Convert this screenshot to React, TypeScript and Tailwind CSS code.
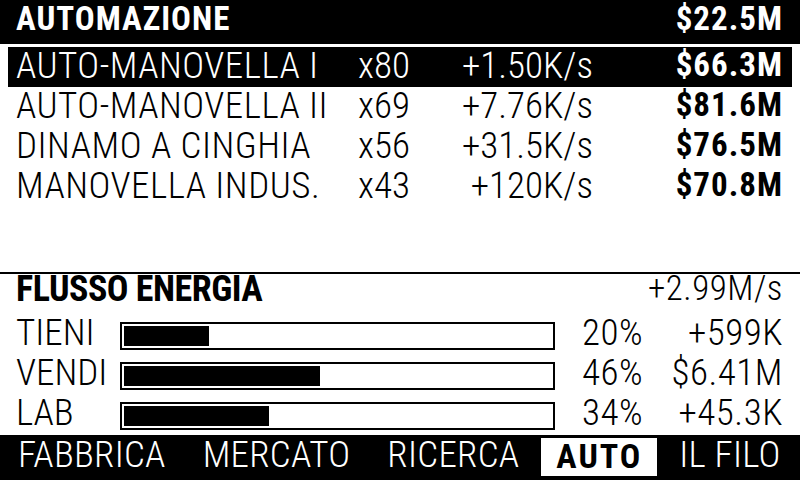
import React from 'react';

const machines = [
  { name: 'AUTO-MANOVELLA I', count: 'x80', rate: '+1.50K/s', price: '$66.3M', active: true },
  { name: 'AUTO-MANOVELLA II', count: 'x69', rate: '+7.76K/s', price: '$81.6M' },
  { name: 'DINAMO A CINGHIA', count: 'x56', rate: '+31.5K/s', price: '$76.5M' },
  { name: 'MANOVELLA INDUS.', count: 'x43', rate: '+120K/s', price: '$70.8M' },
];

const flows = [
  { label: 'TIENI', pct: 20, value: '+599K' },
  { label: 'VENDI', pct: 46, value: '$6.41M' },
  { label: 'LAB', pct: 34, value: '+45.3K' },
];

const tabs = ['FABBRICA', 'MERCATO', 'RICERCA', 'AUTO', 'IL FILO'];

export default function App() {
  return (
    <div className="w-[800px] h-[480px] bg-white text-black overflow-hidden flex flex-col [font-family:'Roboto_Condensed','Roboto',sans-serif]">
      {/* header */}
      <div className="h-[44px] shrink-0 bg-black text-white flex items-start justify-between pl-4 pr-[17px] text-[33px] leading-[38px] font-bold tracking-[1px]">
        <span>AUTOMAZIONE</span>
        <span>$22.5M</span>
      </div>

      {/* machine list */}
      <div className="h-[228px] shrink-0 pt-[3px] px-2">
        {machines.map((m) => (
          <div
            key={m.name}
            className={`h-[40px] grid grid-cols-[342px_60px_175px_1fr] items-start pl-2 pr-[9px] leading-[40px] ${
              m.active ? 'bg-black text-white' : ''
            }`}
          >
            <span className="text-[37px] font-light tracking-[0.5px] -mt-[1px]">{m.name}</span>
            <span className="text-[37px] font-light -mt-[1px]">{m.count}</span>
            <span className="text-[37px] font-light text-right -mt-[1px]">{m.rate}</span>
            <span className="text-[33px] font-bold text-right tracking-[1px] -mt-[2px]">{m.price}</span>
          </div>
        ))}
      </div>

      {/* energy flow */}
      <div className="border-t-2 border-black h-[163px] shrink-0">
        <div className="h-[40px] flex items-start justify-between pl-4 pr-[17px] leading-[40px]">
          <span className="text-[36px] font-bold tracking-[-0.5px] -mt-[5px]">FLUSSO ENERGIA</span>
          <span className="text-[35px] font-light tracking-[0.5px] -mt-[5px]">+2.99M/s</span>
        </div>
        {flows.map((f) => (
          <div key={f.label} className="h-[40px] grid grid-cols-[104px_435px_27px_70px_1fr] items-start pl-4 pr-[17px] leading-[40px]">
            <span className="text-[37px] font-light -mt-[1px]">{f.label}</span>
            <div className="mt-[8px] h-[28px] border-2 border-black p-[2px]">
              <div className="h-full bg-black" style={{ width: `${f.pct}%` }} />
            </div>
            <span />
            <span className="text-[37px] font-light tracking-[0.5px] -mt-[1px]">{f.pct}%</span>
            <span className="text-[37px] font-light text-right tracking-[0.5px] -mt-[1px]">{f.value}</span>
          </div>
        ))}
      </div>

      {/* tab bar */}
      <div className="flex-1 bg-black text-white flex items-start gap-[7px] pl-[3px] pt-[3px]">
        {tabs.map((t) => (
          <div
            key={t}
            className={`h-[38px] px-[15px] leading-[40px] ${
              t === 'AUTO'
                ? 'bg-white text-black font-bold text-[34px] tracking-[2px]'
                : 'font-light text-[37px] tracking-[0.25px]'
            }`}
          >
            <span className={t === 'AUTO' ? 'block -mt-[2px]' : 'block -mt-[3px]'}>{t}</span>
          </div>
        ))}
      </div>
    </div>
  );
}
